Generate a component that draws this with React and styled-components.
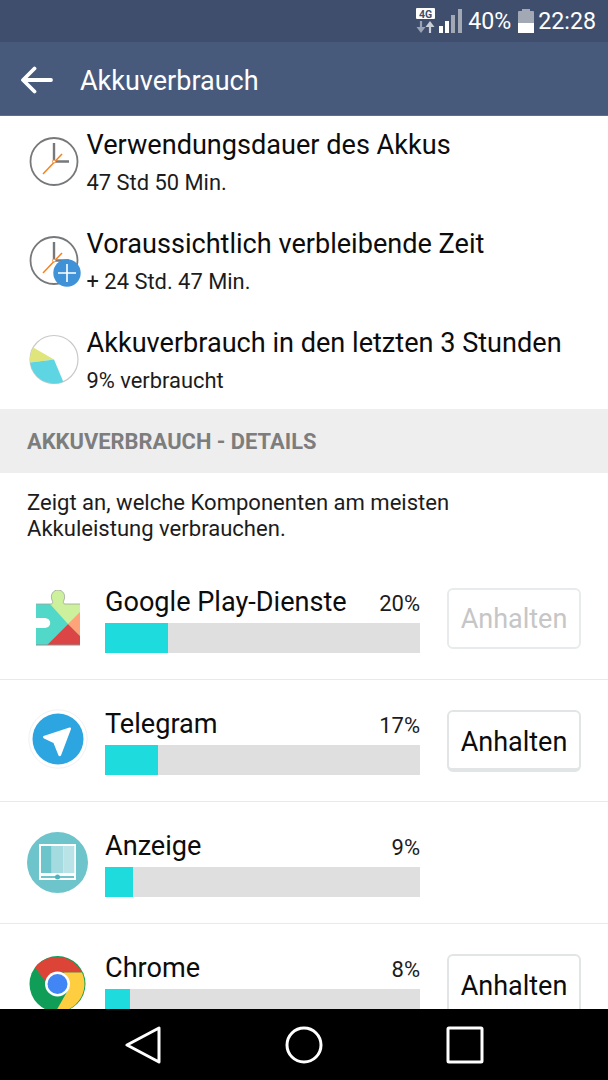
import React from "react";
import styled, { createGlobalStyle } from "styled-components";

const Global = createGlobalStyle`
  html, body { margin: 0; padding: 0; background: #fff; }
  * { box-sizing: border-box; }
`;
const Screen = styled.div`
  width: 608px; height: 1080px; display: flex; flex-direction: column; overflow: hidden;
  font-family: Roboto, "Liberation Sans", sans-serif; background: #fff; color: #111;
`;
const StatusBar = styled.div`
  height: 42px; flex: none; background: #3f4e6d; color: #fff; display: flex; align-items: center;
  justify-content: flex-end; padding: 0 12px 0 0; font-size: 23.2px; line-height: 42px;
`;
const StatusPct = styled.span`margin: 0 7px 0 5px;`;
const StatusTime = styled.span`margin-left: 4px;`;
const AppBar = styled.div`
  height: 74px; flex: none; background: #475a7b; color: #fff; display: flex; align-items: center; padding: 2px 0 0 20px;
  border-bottom: 1px solid #5e6f8c;
`;
const AppTitle = styled.div`font-size: 27px; margin: 2px 0 0 27px; font-weight: 400;`;
const Content = styled.div`flex: 1; min-height: 0; overflow: hidden;`;
const Summary = styled.div`height: 293px; padding-top: 12px; display: flex; flex-direction: column; gap: 28px;`;
const SummaryRow = styled.div`display: flex; padding-left: 27px;`;
const SummaryIcon = styled.div`width: 59.5px; flex: none; padding-top: 6px;`;
const SummaryText = styled.div`display: flex; flex-direction: column;`;
const SummaryTitle = styled.div`font-size: 27.1px; line-height: 34px; color: #0c0c0c;`;
const SummarySub = styled.div`font-size: 21.9px; line-height: 32px; margin-top: 5px; color: #1c1c1c;`;
const SectionHeader = styled.div`
  height: 64px; background: #eeeeee; display: flex; align-items: center; padding-left: 27px;
  font-size: 21.9px; font-weight: 700; color: #7d7d7d;
`;
const Description = styled.div`padding: 17px 27px 0; height: 85px; font-size: 22.05px; line-height: 26px; color: #1c1c1c;`;
const AppRow = styled.div`
  height: 122px; flex: none; display: flex; align-items: flex-start; padding-left: 27px; border-bottom: 1px solid #e9e9e9;
`;
const AppIcon = styled.div`width: 78px; flex: none; padding-top: ${p => p.$top}px; height: 100%;`;
const AppMain = styled.div`width: 315px; flex: none; padding-top: 26px;`;
const NameLine = styled.div`display: flex; justify-content: space-between; align-items: center; height: 36px;`;
const AppName = styled.span`font-size: 27.1px; line-height: 36px; color: #0c0c0c;`;
const Percent = styled.span`font-size: 22px; line-height: 36px; padding-top: 4px; color: #1c1c1c;`;
const Bar = styled.div`height: 30px; margin-top: 3px; background: #dfdfdf;`;
const Fill = styled.div`height: 100%; background: #1edcde;`;
const PauseButton = styled.div`
  width: 134px; height: ${p => (p.$disabled ? 61 : 62)}px; margin: 30px 0 0 27px; padding-top: ${p => (p.$disabled ? 1 : 3)}px;
  flex: none; display: flex; align-items: center; justify-content: center;
  background: #fff; border-radius: 6px; font-size: 27px;
  border: 2px solid ${p => (p.$disabled ? "#e8ebeb" : "#e2e5e5")};
  border-bottom-width: ${p => (p.$disabled ? 2 : 4)}px;
  color: ${p => (p.$disabled ? "#c6c6c6" : "#0c0c0c")};
`;
const NavBar = styled.div`
  height: 71px; flex: none; background: #000; display: flex; align-items: center; justify-content: space-between;
  padding: 0 124px 0 125px;
`;

const Clock = ({ plus }) => (
  <svg width="56" height="54" viewBox="0 0 56 54">
    <circle cx="27" cy="27.500" r="23.500" fill="#fff" stroke="#77787a" strokeWidth="1.800" />
    <path d="M27 9V27.500H42" fill="none" stroke="#77787a" strokeWidth="2.400" />
    <path d="M16 40L35 20" stroke="#f58220" strokeWidth="1.500" />
    <circle cx="27" cy="27.500" r="1.500" fill="#fff" stroke="#f58220" strokeWidth="0.800" />
    {plus && (
      <g>
        <circle cx="40" cy="40" r="13.700" fill="#3f92d8" />
        <path d="M40 31V49M31 40H49" stroke="#fff" strokeWidth="1.600" />
      </g>
    )}
  </svg>
);
const Pie = () => (
  <svg width="54" height="54" viewBox="0 0 54 54">
    <circle cx="27" cy="27.500" r="24" fill="#fff" stroke="#c9c9c9" strokeWidth="1.200" />
    <path d="M27 27.500L6.300 15.500A24 24 0 0 0 3.200 30.500Z" fill="#dfe57a" />
    <path d="M27 27.500L3.200 30.500A24 24 0 0 0 36.300 49.700Z" fill="#5ed5e2" />
  </svg>
);
const Puzzle = () => (
  <svg width="54" height="57" viewBox="-9 0 54 57">
    <defs>
      <clipPath id="pz">
        <path d="M0 14H15C17 14 17 12 16 10C14 5 17 0 22 0C27 0 30 5 28 10C27 12 27 14 29 14H44V55H0V38H9C16 38 16 28 9 28H0Z" />
      </clipPath>
    </defs>
    <g clipPath="url(#pz)">
      <rect x="0" y="0" width="44" height="56" fill="#cdf09c" />
      <path d="M0 14H14L32 34L11 55H0Z" fill="#52d8c8" />
      <path d="M44 22L32 34L44 46Z" fill="#ffa37a" />
      <path d="M32 34L11 55H44V46Z" fill="#dc4545" />
    </g>
    <path d="M0 14H15C17 14 17 12 16 10C14 5 17 0 22 0C27 0 30 5 28 10C27 12 27 14 29 14H44" fill="none" stroke="#9aa59a" strokeWidth="0.800" />
    <path d="M0 55H44" stroke="#8f8f8f" strokeWidth="1" />
  </svg>
);
const Telegram = () => (
  <svg width="60" height="60" viewBox="0 0 60 60" style={{ marginLeft: 0.5 }}>
    <circle cx="30" cy="30" r="29.200" fill="#fff" stroke="#f1f1f1" />
    <circle cx="30" cy="30" r="25.500" fill="#2ca5e0" />
    <path d="M15.500 27L41.500 18.500C42.500 18.200 43.300 19 43 20L33 46.500C32.500 47.500 31 47.500 30.500 46.500L25.500 34L16 29.500C15 29 14.800 27.500 15.500 27Z" fill="#fff" />
  </svg>
);
const Display = () => (
  <svg width="62" height="62" viewBox="0 0 62 62">
    <circle cx="30.500" cy="30.500" r="30.500" fill="#6ec4cb" />
    <rect x="12" y="12" width="37" height="36" fill="#fff" />
    <rect x="14" y="14" width="10.700" height="27" fill="#6ec4cb" />
    <rect x="24.700" y="14" width="11.600" height="27" fill="#a3dbe0" />
    <rect x="36.300" y="14" width="11" height="27" fill="#b9e3e6" />
    <rect x="14" y="44" width="33" height="2" fill="#6ec4cb" />
    <circle cx="30.500" cy="45" r="2.500" fill="#4fb3bc" />
  </svg>
);
const Chrome = () => (
  <svg width="60" height="58" viewBox="-2.500 0 60 58">
    <circle cx="28" cy="28" r="28" fill="#109d58" />
    <path d="M5.500 11.500A28 28 0 0 1 52.500 16.500H28C22 16.500 17.500 21 17 27Z" fill="#db4437" />
    <path d="M52.500 16.500A28 28 0 0 1 26 56L38 35C41 30 40 22 34 16.500Z" fill="#ffcd40" />
    <circle cx="28" cy="28" r="12.500" fill="#fff" />
    <circle cx="28" cy="28" r="10" fill="#4285f4" />
  </svg>
);
const FourG = () => (
  <svg width="21" height="26" viewBox="0 0 21 26" style={{ marginRight: 2 }}>
    <rect x="1" y="0" width="19" height="11" rx="1" fill="#fff" />
    <text x="10.500" y="9.500" textAnchor="middle" fontFamily="Roboto, sans-serif" fontSize="10.500" fontWeight="700" fill="#3f4e6d">4G</text>
    <path d="M6 13V20" stroke="#9aa3b3" strokeWidth="2.200" />
    <path d="M1.500 19H10.500L6 25Z" fill="#9aa3b3" />
    <path d="M15 18V25" stroke="#c9ced7" strokeWidth="2.200" />
    <path d="M10.500 19H19.500L15 13Z" fill="#c9ced7" />
  </svg>
);
const Signal = () => (
  <svg width="25" height="24" viewBox="0 0 25 24">
    <rect x="1" y="17" width="4" height="7" fill="#fff" />
    <rect x="7" y="12" width="4" height="12" fill="#fff" />
    <rect x="13" y="6" width="4" height="18" fill="#a2a8b4" />
    <rect x="20" y="0" width="4" height="24" fill="#a2a8b4" />
  </svg>
);
const Battery = () => (
  <svg width="16" height="24" viewBox="0 0 16 24">
    <rect x="4" y="0" width="8" height="3" fill="#a2a8b4" />
    <rect x="0" y="2" width="16" height="22" rx="1" fill="#a2a8b4" />
    <rect x="0" y="14" width="16" height="10" fill="#fff" />
  </svg>
);
const BackArrow = () => (
  <svg width="33" height="28" viewBox="0 0 33 28">
    <path d="M31 14H4M14.500 2.500L3 14L14.500 25.500" fill="none" stroke="#fff" strokeWidth="3.800" strokeLinecap="round" strokeLinejoin="round" />
  </svg>
);

const summaries = [
  { icon: <Clock />, title: "Verwendungsdauer des Akkus", sub: "47 Std 50 Min." },
  { icon: <Clock plus />, title: "Voraussichtlich verbleibende Zeit", sub: "+ 24 Std. 47 Min." },
  { icon: <Pie />, title: "Akkuverbrauch in den letzten 3 Stunden", sub: "9% verbraucht" },
];
const apps = [
  { icon: <Puzzle />, top: 32, name: "Google Play-Dienste", pct: 20, w: 63, btn: "disabled" },
  { icon: <Telegram />, top: 29, name: "Telegram", pct: 17, w: 53, btn: "on" },
  { icon: <Display />, top: 30, name: "Anzeige", pct: 9, w: 28 },
  { icon: <Chrome />, top: 32, name: "Chrome", pct: 8, w: 25, btn: "on" },
];

export default function App() {
  return (
    <Screen>
      <Global />
      <StatusBar>
        <FourG />
        <Signal />
        <StatusPct>40%</StatusPct>
        <Battery />
        <StatusTime>22:28</StatusTime>
      </StatusBar>
      <AppBar>
        <BackArrow />
        <AppTitle>Akkuverbrauch</AppTitle>
      </AppBar>
      <Content>
        <Summary>
          {summaries.map(s => (
            <SummaryRow key={s.title}>
              <SummaryIcon>{s.icon}</SummaryIcon>
              <SummaryText>
                <SummaryTitle>{s.title}</SummaryTitle>
                <SummarySub>{s.sub}</SummarySub>
              </SummaryText>
            </SummaryRow>
          ))}
        </Summary>
        <SectionHeader>AKKUVERBRAUCH - DETAILS</SectionHeader>
        <Description>
          Zeigt an, welche Komponenten am meisten<br />Akkuleistung verbrauchen.
        </Description>
        {apps.map(a => (
          <AppRow key={a.name}>
            <AppIcon $top={a.top}>{a.icon}</AppIcon>
            <AppMain>
              <NameLine>
                <AppName>{a.name}</AppName>
                <Percent>{a.pct}%</Percent>
              </NameLine>
              <Bar><Fill style={{ width: a.w }} /></Bar>
            </AppMain>
            {a.btn && <PauseButton $disabled={a.btn === "disabled"}>Anhalten</PauseButton>}
          </AppRow>
        ))}
      </Content>
      <NavBar>
        <svg width="36" height="38" viewBox="0 0 36 38"><path d="M34 2V36L2 19Z" fill="none" stroke="#fff" strokeWidth="3" strokeLinejoin="round" /></svg>
        <svg width="38" height="38" viewBox="0 0 38 38"><circle cx="19" cy="19" r="17" fill="none" stroke="#fff" strokeWidth="3" /></svg>
        <svg width="38" height="38" viewBox="0 0 38 38"><rect x="2" y="2" width="34" height="34" fill="none" stroke="#fff" strokeWidth="3" rx="1" /></svg>
      </NavBar>
    </Screen>
  );
}
